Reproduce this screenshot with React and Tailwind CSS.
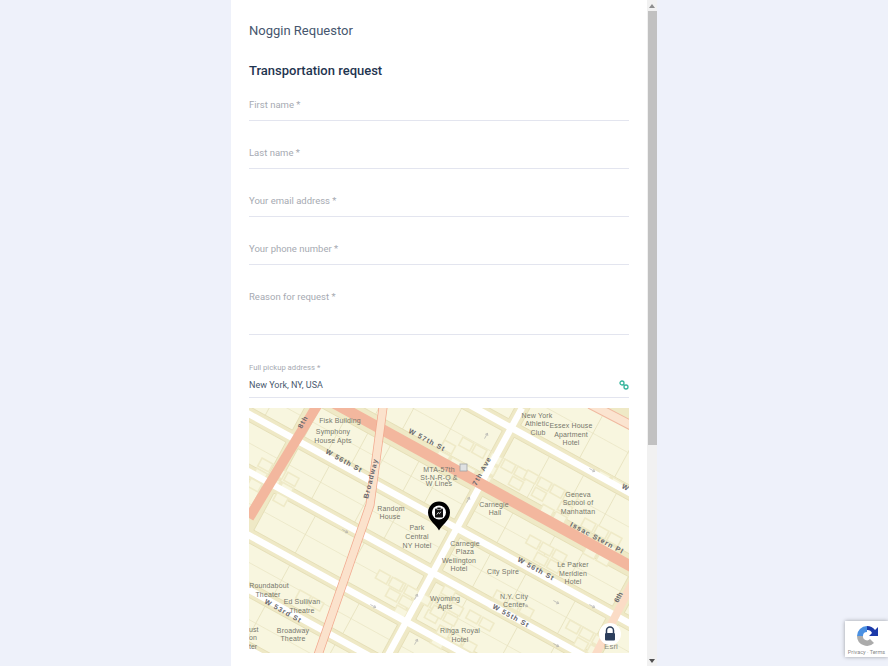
import React from "react";

const F = { fontFamily: 'Roboto, "Noto Sans", sans-serif' };
const P = (u, v) => [458 + u - 0.54 * v, 527 + 0.55 * u + v];
const poly = (pts) => pts.map((p) => P(p[0], p[1]).map((n) => n.toFixed(1)).join(",")).join(" ");
const toUV = (x, y) => {
  const dx = x - 458, dy = y - 527;
  const u = (dx + 0.54 * dy) / 1.297;
  return [u, dy - 0.55 * u];
};

const us = [-340, -162, 0, 158, 340];
const vs = [-160, -99, -43, 1.5, 46, 95, 137, 183, 240];

function hash(a, b) {
  return Math.abs(Math.sin(a * 12.9898 + b * 78.233) * 43758.5453) % 1;
}

function Blocks() {
  const out = [];
  for (let i = 0; i < us.length - 1; i++) {
    for (let j = 0; j < vs.length - 1; j++) {
      const insetTop = vs[j] === -43 ? 9 : 6;
      const insetBottom = vs[j + 1] === -43 ? 9 : 6;
      const u0 = us[i] + 6, u1 = us[i + 1] - 6, v0 = vs[j] + insetTop, v1 = vs[j + 1] - insetBottom;
      out.push(<polygon key={`b${i}${j}`} points={poly([[u0, v0], [u1, v0], [u1, v1], [u0, v1]])} fill="#f8f6df" stroke="#dfd8ae" strokeWidth="0.7" />);
      const n = 2 + Math.floor(hash(i, j) * 4);
      for (let k = 1; k <= n; k++) {
        const u = u0 + ((u1 - u0) * (k + (hash(k, j + i) - 0.5) * 0.5)) / (n + 1);
        out.push(<polyline key={`l${i}${j}${k}`} points={poly([[u, v0], [u, v1]])} fill="none" stroke="#e2dcb6" strokeWidth="0.7" />);
      }
      const vm = (v0 + v1) / 2;
      out.push(<polyline key={`m${i}${j}`} points={poly([[u0, vm], [u1, vm]])} fill="none" stroke="#e6e0bd" strokeWidth="0.6" />);
    }
  }
  return out;
}

const clusters = [
  [262, 458, 3, 4], [395, 578, 4, 3], [492, 452, 3, 3], [528, 470, 4, 3], [585, 518, 3, 3],
  [530, 535, 3, 2], [497, 590, 3, 2], [440, 625, 3, 2], [570, 620, 3, 2], [300, 590, 3, 1],
  [445, 585, 2, 3], [385, 560, 2, 2], [450, 430, 3, 3], [600, 470, 3, 2], [470, 610, 2, 2],
];

function Clusters() {
  const out = [];
  clusters.forEach(([x, y, nu, nv], c) => {
    const [u, v] = toUV(x, y);
    for (let a = 0; a < nu; a++) {
      for (let b = 0; b < nv; b++) {
        if (hash(a + c, b + 2) < 0.22) continue;
        const uu = u + a * 13, vv = v + b * 10;
        out.push(<polygon key={`k${c}${a}${b}`} points={poly([[uu, vv], [uu + 11, vv], [uu + 11, vv + 8], [uu, vv + 8]])} fill="#f8f6df" stroke="#efeac8" strokeWidth="1.6" />);
      }
    }
  });
  return out;
}

const Street = ({ v }) => <polyline points={poly([[-340, v], [340, v]])} stroke="#ffffff" strokeWidth="6.5" fill="none" />;

const labels = [
  ["Fisk Building", 340, 423], ["Symphony", 333, 434], ["House Apts", 333, 443],
  ["New York", 537, 418], ["Athletic", 537, 426], ["Club", 538, 435],
  ["Essex House", 571, 428], ["Apartment", 571, 437], ["Hotel", 571, 445],
  ["MTA-57th", 439, 472], ["St-N-R-Q &", 439, 480], ["W Lines", 439, 486],
  ["Random", 391, 511], ["House", 390, 519],
  ["Park", 417, 530], ["Central", 417, 539], ["NY Hotel", 417, 548],
  ["Carnegie", 494, 507], ["Hall", 495, 515],
  ["Geneva", 578, 497], ["School of", 578, 505], ["Manhattan", 578, 514],
  ["Carnegie", 465, 546], ["Plaza", 465, 554], ["Wellington", 459, 563], ["Hotel", 459, 571],
  ["City Spire", 503, 574], ["Le Parker", 573, 567], ["Meridien", 573, 576], ["Hotel", 573, 584],
  ["N.Y. City", 514, 599], ["Center", 514, 607],
  ["Wyoming", 445, 601], ["Apts", 445, 609],
  ["Rihga Royal", 460, 633], ["Hotel", 460, 642],
  ["Roundabout", 269, 588], ["Theater", 268, 597],
  ["Ed Sullivan", 302, 604], ["Theatre", 302, 613],
  ["Broadway", 293, 633], ["Theatre", 293, 641],
];

const streetLabels = [
  ["W 57th St", 426, 442, 28], ["W 56th St", 343, 463, 29], ["W 56th St", 535, 571, 29],
  ["W 55th St", 510, 618, 29], ["W 53rd St", 282, 613, 29], ["Issac Stern Pl", 596, 540, 28],
  ["Broadway", 373, 479, -76], ["8th", 305, 423, -61], ["7th Ave", 484, 472, -61],
];

const arrows = [[345, 531, 29], [373, 606, 29], [556, 602, 29], [592, 606, 29], [486, 436, -61], [468, 500, -61], [592, 470, 29], [525, 605, 29], [556, 645, 29], [416, 642, -61], [416, 597, -61]];

function MapArt() {
  return (
    <svg viewBox="249 408 380 245" className="block w-full h-full">
      <rect x="249" y="408" width="380" height="245" fill="#efe9c6" />
      <Blocks />
      <Clusters />
      {[-99, 1.5, 46, 95, 137, 183].map((v) => <Street key={v} v={v} />)}
      <polyline points="522,408 387,657" stroke="#ffffff" strokeWidth="6.5" fill="none" />
      <polyline points={poly([[-340, -43], [340, -43]])} stroke="#f3b79e" strokeWidth="11" fill="none" />
      <polyline points="318,404 249,518" stroke="#f3b79e" strokeWidth="10" fill="none" />
      <polyline points="384,400 370,505 343,583 318,655" stroke="#f2a98f" strokeWidth="9" fill="none" />
      <polyline points="384,400 370,505 343,583 318,655" stroke="#fbe2cc" strokeWidth="7.500" fill="none" />
      <polyline points="640,568 594,658" stroke="#fbdcc6" strokeWidth="8" fill="none" />
      <polyline points="590,404 640,430" stroke="#f0b9a0" strokeWidth="10" fill="none" />
      <polyline points="590,404 640,430" stroke="#fbe4d0" strokeWidth="8" fill="none" />
      {arrows.map(([x, y, r], i) => (
        <path key={i} d={`M${x - 3} ${y}h6m-2-1.500l2 1.500-2 1.500`} fill="none" stroke="#a9a9a9" strokeWidth="0.6" transform={`rotate(${r} ${x} ${y})`} />
      ))}
      {labels.map(([t, x, y], i) => (
        <text key={i} x={x} y={y} textAnchor="middle" fontSize="7" letterSpacing="0.15" fill="#76766c" fontFamily='"Liberation Sans", sans-serif'>{t}</text>
      ))}
      {streetLabels.map(([t, x, y, r], i) => (
        <text key={i} x={x} y={y} textAnchor="middle" fontSize="7" fontWeight="700" letterSpacing="1" fill="#66666c" fontFamily='"Liberation Sans", sans-serif' transform={`rotate(${r} ${x} ${y})`}>{t}</text>
      ))}
      <text x="627" y="491" fontSize="7" fontWeight="700" fill="#66666c" fontFamily='"Liberation Sans", sans-serif' transform="rotate(29 627 491)" textAnchor="end">W</text>
      <text x="618" y="603" fontSize="7" fontWeight="700" fill="#66666c" fontFamily='"Liberation Sans", sans-serif' transform="rotate(-62 618 603)">6th</text>
      <text x="249" y="632" fontSize="7" fill="#76766c" fontFamily='"Liberation Sans", sans-serif'>ust</text>
      <text x="249" y="640" fontSize="7" fill="#76766c" fontFamily='"Liberation Sans", sans-serif'>on</text>
      <text x="249" y="649" fontSize="7" fill="#76766c" fontFamily='"Liberation Sans", sans-serif'>ter</text>
      <rect x="460" y="464" width="7" height="7" fill="#dfe1e2" stroke="#9fa3a6" strokeWidth="0.8" />
      <text x="611" y="649" textAnchor="middle" fontSize="8" fill="#8b8b84" fontFamily='"Liberation Sans", sans-serif'>Esri</text>
      <circle cx="610" cy="634" r="11" fill="#ffffff" />
      <path d="M606.500 633v-2.400a3.500 3.500 0 0 1 7 0V633" fill="none" stroke="#2c3e5c" strokeWidth="1.500" />
      <rect x="605" y="633" width="10" height="7.500" rx="1" fill="#2c3e5c" />
      <path d="M439 530.500c-2-5-11-9.500-11-18a11 11 0 0 1 22 0c0 8.500-9 13-11 18z" fill="#000000" />
      <circle cx="439" cy="512.500" r="7" fill="#ffffff" />
      <rect x="435" y="508.500" width="8" height="9" rx="0.800" fill="#111111" />
      <rect x="437" y="507.200" width="4" height="2.400" fill="#111111" stroke="#ffffff" strokeWidth="0.500" />
      <path d="M436.800 514.500l1.500-2 1.200 1.200 1.400-2" fill="none" stroke="#ffffff" strokeWidth="0.800" />
    </svg>
  );
}

function Field({ label, cls }) {
  return (
    <div className={`flex border-b border-[#e3e5ef] text-[9.5px] leading-4 text-[#a6aab2] ${cls}`}>
      <span>{label}</span>
    </div>
  );
}

export default function App() {
  return (
    <div style={F} className="relative flex justify-center h-[666px] overflow-hidden bg-[#eef1fa]">
      <div className="flex flex-col w-[416px] h-[666px] overflow-hidden bg-white px-[18px]">
        <h1 className="h-[61px] shrink-0 flex items-center text-[13px] font-normal text-[#46566e]">Noggin Requestor</h1>
        <h2 className="h-[20px] shrink-0 flex items-center text-[13px] font-medium leading-5 text-[#1f3550]">Transportation request</h2>
        <Field label="First name *" cls="h-[40px] shrink-0 items-end pb-[7px]" />
        <Field label="Last name *" cls="h-[48px] shrink-0 items-end pb-[7px]" />
        <Field label="Your email address *" cls="h-[48px] shrink-0 items-end pb-[7px]" />
        <Field label="Your phone number *" cls="h-[48px] shrink-0 items-end pb-[7px]" />
        <Field label="Reason for request *" cls="h-[70px] shrink-0 items-start pt-[24px]" />
        <div className="h-[63px] shrink-0 border-b border-[#e3e5ef] pt-[27px]">
          <div className="text-[7.7px] leading-3 text-[#a6aab2]">Full pickup address *</div>
          <div className="mt-[3px] flex items-center justify-between text-[9px] leading-4 text-[#4a5a70]">
            <span>New York, NY, USA</span>
            <svg width="10" height="10" viewBox="0 0 10 10" fill="none" stroke="#36b59c" strokeWidth="1.300">
              <circle cx="3" cy="3" r="2" />
              <circle cx="7" cy="7" r="2" />
              <path d="M4.500 4.500l1 1" />
            </svg>
          </div>
        </div>
        <div className="mt-[10px] h-[245px] shrink-0">
          <MapArt />
        </div>
      </div>
      <div className="flex flex-col w-[10px] h-[666px] bg-[#f1f1f1]">
        <div className="h-[11px] flex items-center justify-center">
          <div className="w-0 h-0 border-l-[3px] border-r-[3px] border-b-[4px] border-l-transparent border-r-transparent border-b-[#8d8d8d]" />
        </div>
        <div className="ml-px h-[434px] bg-[#c1c1c1]" />
        <div className="flex-1" />
        <div className="h-[11px] flex items-center justify-center">
          <div className="w-0 h-0 border-l-[3px] border-r-[3px] border-t-[4px] border-l-transparent border-r-transparent border-t-[#505050]" />
        </div>
      </div>
      <div className="absolute left-[845px] top-[621px] flex flex-col items-center w-[43px] h-[36px] pt-[2px] bg-white shadow-[0_0_4px_rgba(0,0,0,0.35)]">
        <svg width="26" height="26" viewBox="0 0 26 26" fill="none">
          <path d="M3 13a10 10 0 0 1 10-10v6a4 4 0 0 0-4 4z" fill="#4a90e2" />
          <path d="M13 3a10 10 0 0 1 8 4l3-3v9h-9l3-3a5 5 0 0 0-5-3z" fill="#1c3aa9" />
          <path d="M3 13h6a4 4 0 0 0 7 3l4 4A10 10 0 0 1 3 13z" fill="#ababab" />
        </svg>
        <div className="whitespace-nowrap text-[5.500px] leading-[7px] text-[#8a8a8a]">Privacy · Terms</div>
      </div>
    </div>
  );
}
